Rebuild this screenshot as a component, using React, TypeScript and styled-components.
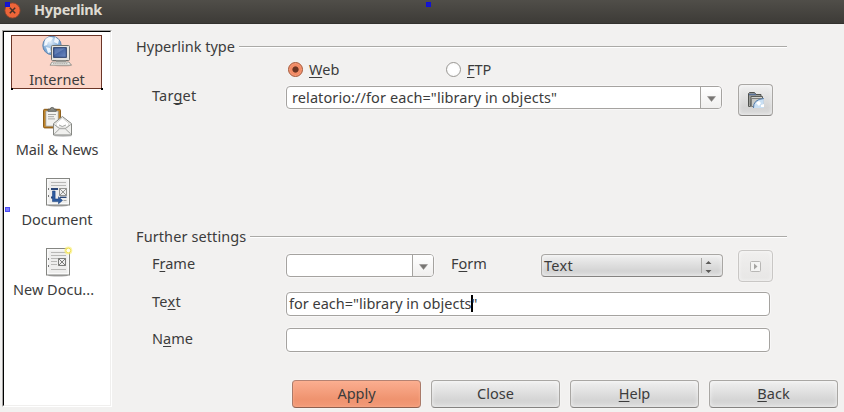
import React from "react";
import styled, { createGlobalStyle, css } from "styled-components";

const GlobalStyle = createGlobalStyle`
  * { box-sizing: border-box; }
  body { margin: 0; background: #f2f1f0; }
  svg { display: block; flex: none; }
`;

const Dialog = styled.div`
  position: relative;
  display: flex;
  flex-direction: column;
  width: 844px;
  height: 412px;
  overflow: hidden;
  background: #f2f1f0;
  color: #3c3c3c;
  font: 14.5px/20px "Noto Sans", "Open Sans", sans-serif;
  white-space: nowrap;
`;

const TitleBar = styled.header`
  display: flex;
  align-items: flex-start;
  gap: 13px;
  flex: none;
  height: 24px;
  padding-left: 4px;
  background: linear-gradient(#504e49, #3d3b37);
  border-bottom: 1px solid #33322e;
`;

const Title = styled.h1`
  margin: 0;
  color: #dfdbd2;
  font-size: 14.5px;
  line-height: 18px;
  letter-spacing: -0.3px;
`;

const CloseIcon = styled.svg`
  margin-top: 2px;
`;

const Handle = styled.i<{ $x: number; $y: number; $soft?: boolean }>`
  position: absolute;
  left: ${(p) => p.$x}px;
  top: ${(p) => p.$y}px;
  width: 5px;
  height: 5px;
  background: ${(p) => (p.$soft ? "#7a7aff" : "#1818c8")};
  border: 1px solid ${(p) => (p.$soft ? "#4c4cf5" : "#1010d8")};
`;

const Body = styled.div`
  display: flex;
  flex: 1;
`;

const Sidebar = styled.nav`
  flex: none;
  width: 110px;
  height: 377px;
  margin: 6px 0 0 2px;
  border: 1px solid;
  border-color: #a8a7a5 #fff #fff #a8a7a5;
`;

const SidebarInner = styled.div`
  display: flex;
  flex-direction: column;
  gap: 16px;
  height: 100%;
  padding: 3px 7px;
  background: #fff;
  border: 1px solid;
  border-color: #000 #f0efee #f0efee #000;
`;

const Category = styled.div<{ $selected?: boolean }>`
  position: relative;
  flex: none;
  width: 91px;
  height: 54px;
  display: flex;
  flex-direction: column;
  align-items: center;
  border: 1px solid transparent;
  > svg { margin-top: -1px; }
  ${(p) =>
    p.$selected &&
    css`
      background: #fbd5c8;
      border-color: #6b3527;
      &::before,
      &::after {
        content: "";
        position: absolute;
        bottom: -2px;
        width: 2px;
        height: 2px;
        background: #000;
      }
      &::before { left: -1px; }
      &::after { right: -2px; }
    `}
`;

const CategoryLabel = styled.span<{ $shift?: number; $track?: number }>`
  margin: 2px ${(p) => p.$shift ?? 0}px 0 1px;
  letter-spacing: ${(p) => p.$track ?? 0}px;
`;

const Main = styled.main`
  flex: 1;
  padding: 12px 0 0 24px;
`;

const GroupHeading = styled.h2<{ $track?: number }>`
  display: flex;
  align-items: flex-start;
  gap: 4px;
  width: 651px;
  height: 21px;
  margin: 0;
  font-size: inherit;
  font-weight: normal;
  letter-spacing: ${(p) => p.$track ?? 0}px;
  &::after {
    content: "";
    flex: 1;
    height: 2px;
    margin-top: 10px;
    background: linear-gradient(#abaaa7 50%, #fff 50%);
  }
`;

const RadioRow = styled.div`
  display: flex;
  height: 20px;
  margin: 3px 0 4px 152px;
`;

const RadioOption = styled.label`
  display: flex;
  align-items: flex-start;
  gap: 6px;
  width: 158px;
  line-height: 18px;
`;

const Dot = styled.i<{ $on?: boolean }>`
  width: 15px;
  height: 15px;
  margin-top: 2px;
  border-radius: 50%;
  border: 1px solid ${(p) => (p.$on ? "#a5512f" : "#999793")};
  background: ${(p) =>
    p.$on
      ? "radial-gradient(circle, #6a3422 0 2.7px, #f28b65 3.5px 5px, #f6a080 6.5px)"
      : "radial-gradient(circle, #fff 4px, #f4f4f4)"};
`;

const Key = styled.span`
  text-decoration: underline 1px;
  text-underline-offset: 2px;
  text-decoration-skip-ink: none;
`;

const Row = styled.div<{ $height: number; $gap?: number }>`
  display: flex;
  align-items: flex-start;
  height: ${(p) => p.$height}px;
  margin-top: ${(p) => p.$gap ?? 0}px;
  padding-left: 16px;
`;

const Label = styled.label<{ $width: number; $drop?: number; $track?: number }>`
  width: ${(p) => p.$width}px;
  margin-top: ${(p) => p.$drop ?? 0}px;
  letter-spacing: ${(p) => p.$track ?? 0}px;
`;

const fieldFrame = css`
  border: 1px solid #a5a3a0;
  border-radius: 4px;
  box-shadow: 0 0 0 1px #f8f7f7;
`;

const Combo = styled.div<{ $width: number; $drop: number; $right: number }>`
  ${fieldFrame}
  display: flex;
  width: ${(p) => p.$width}px;
  height: 23px;
  margin: ${(p) => p.$drop}px ${(p) => p.$right}px 0 0;
  background: #fff;
`;

const ComboText = styled.span`
  flex: 1;
  padding-left: 5px;
  line-height: 20px;
  letter-spacing: 0.09px;
`;

const ComboArrow = styled.span`
  display: flex;
  align-items: center;
  justify-content: center;
  width: 21px;
  padding-top: 2px;
  border-left: 1px solid #a5a3a0;
  border-radius: 0 3px 3px 0;
  background: linear-gradient(#fff, #f0efee);
`;

const Input = styled.div`
  ${fieldFrame}
  display: flex;
  width: 484px;
  height: 24px;
  padding-left: 2px;
  background: #fff;
  line-height: 20px;
`;

const Caret = styled.i`
  width: 2px;
  height: 17px;
  margin: 2px -1px 0 -1px;
  background: #000;
`;

const raised = css`
  border: 1px solid #a9a7a4;
  border-bottom-color: #858381;
  border-radius: 4px;
  background: linear-gradient(#f0f0f0, #d4d4d4 75%, #dadada);
  box-shadow: inset 0 0 4px rgba(255, 255, 255, 0.65), 0 0 0 1px #f5f4f3;
`;

const Select = styled.div`
  ${raised}
  display: flex;
  align-items: center;
  width: 182px;
  height: 23px;
  margin: 4px 15px 0 0;
  padding: 0 9px 0 2px;
  letter-spacing: 0.3px;
`;

const SelectText = styled.span`
  flex: 1;
  padding-bottom: 2px;
`;

const Tool = styled.div<{ $disabled?: boolean }>`
  ${raised}
  display: flex;
  align-items: center;
  justify-content: center;
  width: 35px;
  height: 32px;
  ${(p) =>
    p.$disabled &&
    css`
      border-color: #c9c7c5;
      background: linear-gradient(#f0efee, #e7e6e5);
    `}
`;

const Actions = styled.footer`
  display: flex;
  gap: 10px;
  margin: 28px 0 0 156px;
`;

const Action = styled.div<{ $primary?: boolean }>`
  ${raised}
  width: 129px;
  height: 28px;
  line-height: 24px;
  text-align: center;
  ${(p) =>
    p.$primary &&
    css`
      border-color: #b58272 #a97a69 #8e604f;
      background: linear-gradient(#fbae90, #ef936f 70%, #f29a78);
      box-shadow: inset 0 0 3px rgba(255, 180, 150, 0.8), 0 0 0 1px #f5f4f3;
    `}
`;

const Spacer = styled.div`
  height: 110px;
`;

const ArrowDown = () => (
  <svg width="9" height="6" viewBox="0 0 9 6">
    <path d="M.5.5h8L4.5 5.5z" fill="#777573" stroke="#8d8b89" strokeWidth=".5" />
  </svg>
);

const InternetIcon = () => (
  <svg width="32" height="32" viewBox="0 0 32 32">
    <defs>
      <radialGradient id="globe" cx=".4" cy=".3">
        <stop offset="0" stopColor="#e4f0fb" />
        <stop offset="1" stopColor="#79a6d4" />
      </radialGradient>
      <linearGradient id="screen" x2="1" y2="1">
        <stop offset="0" stopColor="#26488a" />
        <stop offset="1" stopColor="#6f8dc4" />
      </linearGradient>
    </defs>
    <circle cx="11" cy="10.5" r="9.2" fill="url(#globe)" stroke="#5d83ad" />
    <path d="M4 5c3-4 6-3 8-2l-2 3-3 1-1 3-3 1zM14 2l4 3-1 4-4-2zM5 12l4 1 1 4-3 1z" fill="#f8fcff" opacity=".9" />
    <ellipse cx="22" cy="30" rx="9" ry="1.6" fill="#000" opacity=".15" />
    <rect x="10.5" y="10.5" width="18" height="15" rx="1" fill="#e3e3de" stroke="#72736f" />
    <rect x="12.7" y="12.7" width="12.6" height="9.6" fill="url(#screen)" stroke="#203766" />
    <path d="M13.3 13.3h11L13.3 20z" fill="#8aa2cf" opacity=".45" />
    <path d="M15 25.5h10v1.5H15z" fill="#a5a5a0" />
    <path d="M11 27h17l2.4 3.2H9z" fill="#eeeeea" stroke="#858680" strokeWidth=".8" />
    <path d="M12 28.5h15" stroke="#b3b3ae" strokeDasharray="1.5 .6" />
  </svg>
);

const MailIcon = () => (
  <svg width="32" height="32" viewBox="0 0 32 32">
    <rect x="2.6" y="4.3" width="16.8" height="18.6" rx="1" fill="#c98a2c" stroke="#82530f" />
    <path d="M4.8 6h12.5v15.2H4.8z" fill="#f2f2ef" stroke="#8e8e8a" strokeWidth=".7" />
    <path d="M7 6.3V4.2h2.2q0-1.8 2-1.8t2 1.8h2v2.1z" fill="#888a85" stroke="#555753" strokeWidth=".8" />
    <path d="M7 9.5h8M7 11.7h6M7 13.9h7" stroke="#a6a6a3" />
    <ellipse cx="22" cy="30.7" rx="9" ry="1.2" fill="#000" opacity=".2" />
    <path d="M12.5 18.6 21.4 11.5l9.1 7.1v11.4h-18z" fill="#f0f0ee" stroke="#858783" />
    <path d="M15 18.5 21.4 13l6.5 5.5-1 3.5h-11z" fill="#fff" stroke="#c4c4c1" strokeWidth=".6" />
    <path d="m13.2 19.5 5.5 4.2h5.5l5.6-4.2M13.2 29l5.4-5.2M29.8 29l-5.5-5.2M18 20q3 3 7 0" fill="none" stroke="#999b97" strokeWidth=".9" />
  </svg>
);

const PageBase = () => (
  <>
    <ellipse cx="17" cy="30.5" rx="10" ry="1.1" fill="#000" opacity=".35" />
    <rect x="5.5" y="3.5" width="23" height="26.5" fill="#fafafa" stroke="#858682" />
    <path d="M7.5 5.5h19v22.5h-19z" fill="#eeeeed" />
    <path d="M7.5 13v2M7.5 20v2" stroke="#777" />
    <path d="M10 7.5h15M10 10.5h15" stroke="#b8b8b6" />
  </>
);

const DocumentIcon = () => (
  <svg width="32" height="32" viewBox="0 0 32 32">
    <PageBase />
    <path d="M10 14h7M10 22.5h2" stroke="#2b4778" strokeWidth="1.8" />
    <path d="M18.5 13.5h7v7h-7zm0 0 7 7m0-7-7 7" fill="#eee" stroke="#888986" strokeWidth=".9" />
    <path d="M11.5 16h2.6v8h3.4v-2.2l4 3.6-4 3.4v-2.2h-6z" fill="#2d5b9f" stroke="#1e4481" strokeWidth=".6" />
    <path d="M19 22.3h6.5" stroke="#2b4778" strokeWidth="1.4" />
    <path d="M22.5 25.5h3" stroke="#a6a6a4" />
  </svg>
);

const NewDocumentIcon = () => (
  <svg width="32" height="32" viewBox="0 0 32 32">
    <PageBase />
    <path d="M10 13.5h15M10 16.5h6M10 19.5h6M10 24.5h15" stroke="#b8b8b6" />
    <path d="M17.5 13.5h7v7h-7zm0 0 7 7m0-7-7 7" fill="#eee" stroke="#7b7c79" />
    <circle cx="27.3" cy="5.5" r="4" fill="#f9ef78" opacity=".65" />
    <circle cx="27.3" cy="5.5" r="2.4" fill="#fffef0" stroke="#f1df4c" />
  </svg>
);

const FolderGlobeIcon = () => (
  <svg width="18" height="18" viewBox="0 0 18 18">
    <path d="M1.5 15.5V2.5l1-1h5l1.5 2h5v2" fill="#9c9d99" stroke="#50524f" />
    <path d="M2 3.5h7" stroke="#587099" strokeWidth="1.5" />
    <path d="M1.5 15.5h2l.5-10h11.5v2" fill="#d3d3cf" stroke="#5c5e5a" />
    <path d="M4.5 15.5v-8H16v8z" fill="#c9cac6" stroke="#696b68" strokeWidth=".8" />
    <path d="M6.5 17q-.5-8.5 10.3-9.5V17z" fill="#c9dff3" />
    <path d="M6.5 17q-.5-8.5 10.3-9.5" fill="none" stroke="#557eae" />
    <path d="m9 12 3-2 2 2-2 3zm5 2 3-1v3h-3z" fill="#fff" />
  </svg>
);

const EventIcon = () => (
  <svg width="11" height="11" viewBox="0 0 11 11">
    <rect x=".5" y=".5" width="10" height="10" rx="1" fill="#f4f4f3" stroke="#b8b7b5" />
    <path d="M4 2.5v6l3.5-3z" fill="#a5a4a2" />
  </svg>
);

export default function App() {
  return (
    <>
      <GlobalStyle />
      <Dialog>
        <TitleBar>
          <CloseIcon width="17" height="17" viewBox="0 0 17 17">
            <circle cx="8.5" cy="8.5" r="7.6" fill="#ed6539" stroke="#94452c" strokeWidth=".8" />
            <path d="m5.8 5.8 5.4 5.4m0-5.4-5.4 5.4" stroke="#443129" strokeWidth="1.5" />
          </CloseIcon>
          <Title>Hyperlink</Title>
        </TitleBar>
        <Body>
          <Sidebar>
            <SidebarInner>
              <Category $selected>
                <InternetIcon />
                <CategoryLabel>Internet</CategoryLabel>
              </Category>
              <Category>
                <MailIcon />
                <CategoryLabel $track={-0.15}>Mail &amp; News</CategoryLabel>
              </Category>
              <Category>
                <DocumentIcon />
                <CategoryLabel>Document</CategoryLabel>
              </Category>
              <Category>
                <NewDocumentIcon />
                <CategoryLabel $shift={7}>New Docu...</CategoryLabel>
              </Category>
            </SidebarInner>
          </Sidebar>
          <Main>
            <GroupHeading>Hyperlink type</GroupHeading>
            <RadioRow>
              <RadioOption>
                <Dot $on />
                <span><Key>W</Key>eb</span>
              </RadioOption>
              <RadioOption>
                <Dot />
                <span><Key>F</Key>TP</span>
              </RadioOption>
            </RadioRow>
            <Row $height={32}>
              <Label $width={134} $drop={1} $track={0.2}>Tar<Key>g</Key>et</Label>
              <Combo $width={436} $drop={2} $right={16}>
                <ComboText>relatorio://for each="library in objects"</ComboText>
                <ComboArrow><ArrowDown /></ComboArrow>
              </Combo>
              <Tool><FolderGlobeIcon /></Tool>
            </Row>
            <Spacer />
            <GroupHeading $track={0.1}>Further settings</GroupHeading>
            <Row $height={32} $gap={3}>
              <Label $width={134} $drop={3}>F<Key>r</Key>ame</Label>
              <Combo $width={148} $drop={4} $right={17}>
                <ComboText />
                <ComboArrow><ArrowDown /></ComboArrow>
              </Combo>
              <Label $width={90} $drop={3}>F<Key>o</Key>rm</Label>
              <Select>
                <SelectText>Text</SelectText>
                <svg width="12" height="15" viewBox="0 0 12 15">
                  <path d="M.5 0v15" stroke="#aaa9a7" />
                  <path d="m4.5 6 3-3 3 3zM4.5 12l3 3 3-3z" fill="#5c5b59" />
                </svg>
              </Select>
              <Tool $disabled><EventIcon /></Tool>
            </Row>
            <Row $height={24} $gap={10}>
              <Label $width={134} $drop={-1} $track={0.3}>Te<Key>x</Key>t</Label>
              <Input>
                <span>for each="library in objects</span>
                <Caret />
                <span>"</span>
              </Input>
            </Row>
            <Row $height={24} $gap={12}>
              <Label $width={134}>N<Key>a</Key>me</Label>
              <Input />
            </Row>
            <Actions>
              <Action $primary>Apply</Action>
              <Action>Close</Action>
              <Action><Key>H</Key>elp</Action>
              <Action><Key>B</Key>ack</Action>
            </Actions>
          </Main>
        </Body>
        <Handle $x={5} $y={2} />
        <Handle $x={426} $y={2} />
        <Handle $x={5} $y={207} $soft />
      </Dialog>
    </>
  );
}
